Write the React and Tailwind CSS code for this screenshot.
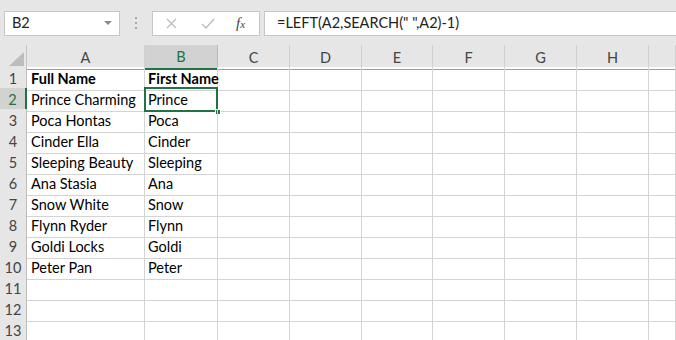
import React from 'react';

const cols = ['A', 'B', 'C', 'D', 'E', 'F', 'G', 'H', ''];

const rows = [
  ['Full Name', 'First Name'],
  ['Prince Charming', 'Prince'],
  ['Poca Hontas', 'Poca'],
  ['Cinder Ella', 'Cinder'],
  ['Sleeping Beauty', 'Sleeping'],
  ['Ana Stasia', 'Ana'],
  ['Snow White', 'Snow'],
  ['Flynn Ryder', 'Flynn'],
  ['Goldi Locks', 'Goldi'],
  ['Peter Pan', 'Peter'],
  ['', ''],
  ['', ''],
  ['', ''],
];

const gridCols = 'grid grid-cols-[27px_118px_73px_72px_72px_71px_72px_72px_72px_1fr]';

const FormulaBar = () => (
  <div className="h-[45px] bg-[#e6e6e6] flex items-center pt-[1px]">
    <div className="ml-[4px] w-[116px] h-[25px] bg-white border border-[#c6c6c6] flex items-center justify-between pl-[7px] pr-[7px]">
      <span className="text-[14.5px] text-[#222]">B2</span>
      <svg width="8" height="4" viewBox="0 0 8 4">
        <path d="M0 0 L8 0 L4 4 Z" fill="#8a8a8a" />
      </svg>
    </div>
    <div className="w-[32px] flex flex-col items-center gap-[3px]">
      <span className="w-[2px] h-[2px] bg-[#a6a6a6]" />
      <span className="w-[2px] h-[2px] bg-[#a6a6a6]" />
      <span className="w-[2px] h-[2px] bg-[#a6a6a6]" />
    </div>
    <div className="w-[108px] h-[25px] bg-white border border-[#c6c6c6] flex items-center">
      <svg className="ml-[13px]" width="11" height="11" viewBox="0 0 11 11">
        <path d="M1 1 L10 10 M10 1 L1 10" stroke="#bdbdbd" strokeWidth="1.3" />
      </svg>
      <svg className="ml-[24px]" width="14" height="11" viewBox="0 0 14 11">
        <path d="M1 6 L5 10 L13 1" stroke="#bdbdbd" strokeWidth="1.4" fill="none" />
      </svg>
      <span className="ml-[21px] text-[15px] italic text-[#444] font-['Liberation_Serif',serif]">
        f<span className="text-[11px]">x</span>
      </span>
    </div>
    <div className="ml-[4px] flex-1 h-[25px] bg-white border border-[#c6c6c6] border-r-0 flex items-center pl-[12px]">
      <span className="text-[14.5px] text-[#222]">=LEFT(A2,SEARCH(" ",A2)-1)</span>
    </div>
  </div>
);

const HeaderRow = () => (
  <div className={`${gridCols} h-[22px] bg-[#e6e6e6]`}>
    <div className="border-r border-b border-[#9f9f9f] border-r-[#c6c6c6] flex items-end justify-end pr-[2px] pb-[3px]">
      <svg width="15" height="14" viewBox="0 0 15 14">
        <path d="M15 0 L15 14 L0 14 Z" fill="#bdbdbd" />
      </svg>
    </div>
    {cols.map((c, i) => (
      <div
        key={i}
        className={
          c === 'B'
            ? 'bg-[#d2d2d2] border-r border-[#bdbdbd] border-b-2 border-b-[#217346] flex items-center justify-center pt-[1px] text-[14.5px] text-[#217346]'
            : 'border-r border-[#d0d0d0] border-b border-b-[#9f9f9f] flex items-center justify-center pt-[1px] text-[14.5px] text-[#444]'
        }
      >
        {c}
      </div>
    ))}
  </div>
);

export default function App() {
  return (
    <div className="w-[676px] h-[340px] overflow-hidden bg-white font-['Lato',sans-serif]">
      <FormulaBar />
      <HeaderRow />
      {rows.map((r, i) => (
        <div key={i} className={`${gridCols} h-[21px]`}>
          <div
            className={
              i === 1
                ? 'bg-[#d2d2d2] border-r-2 border-r-[#217346] border-b border-b-[#bdbdbd] flex items-center justify-center pt-[1px] text-[14.5px] text-[#217346]'
                : 'bg-[#e6e6e6] border-r border-r-[#bdbdbd] border-b border-b-[#d0d0d0] flex items-center justify-center pt-[1px] text-[14.5px] text-[#444]'
            }
          >
            {i + 1}
          </div>
          <div className={`border-r border-b border-[#d4d4d4] flex items-center pl-[4px] pt-[1px] text-[14.5px] text-black whitespace-nowrap ${i === 0 ? 'font-bold' : ''}`}>
            {r[0]}
          </div>
          <div className={`relative border-r border-b border-[#d4d4d4] flex items-center pl-[3px] pt-[1px] text-[14.5px] text-black whitespace-nowrap ${i === 0 ? 'font-bold' : ''}`}>
            {r[1]}
            {i === 1 && (
              <>
                <span className="absolute -left-[1px] -top-[1px] -right-[1px] -bottom-[1px] border-2 border-[#217346]" />
                <span className="absolute -right-[4px] -bottom-[4px] w-[6px] h-[6px] bg-[#217346] border border-white" />
              </>
            )}
          </div>
          {[0, 1, 2, 3, 4, 5, 6].map((k) => (
            <div key={k} className="border-r border-b border-[#d4d4d4]" />
          ))}
        </div>
      ))}
    </div>
  );
}
